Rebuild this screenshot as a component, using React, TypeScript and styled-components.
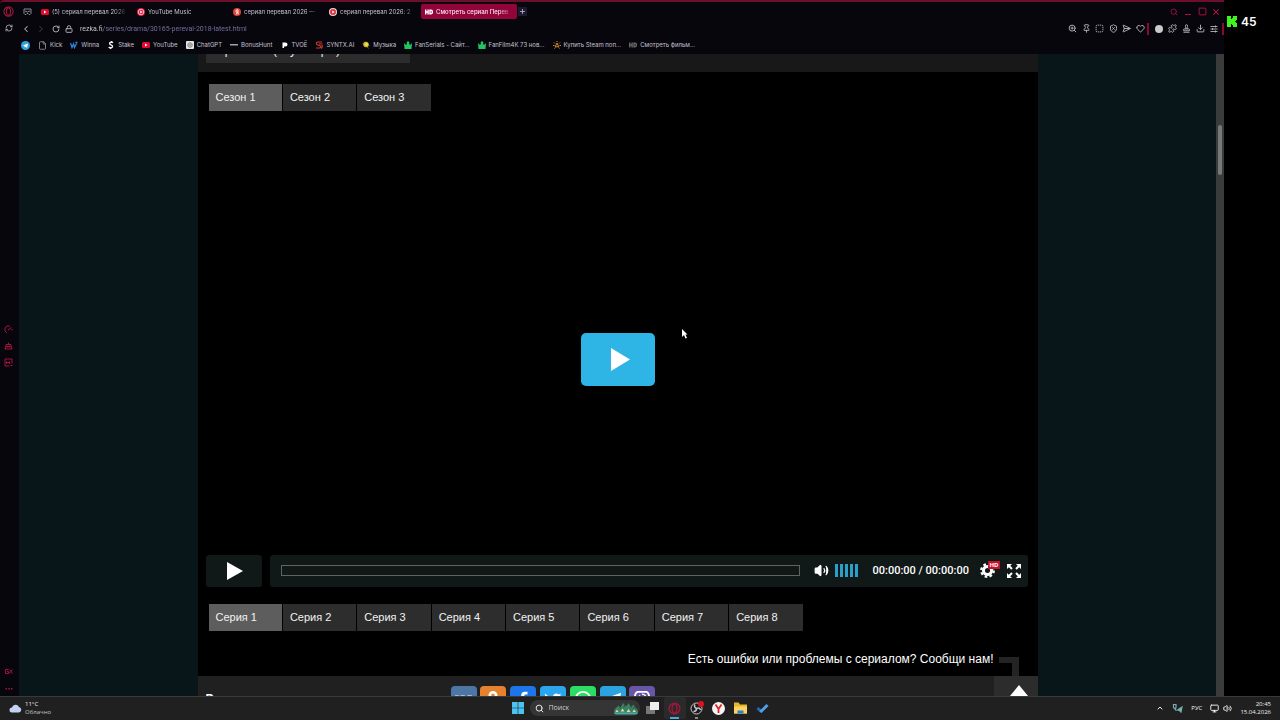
import React from "react";
import styled, { createGlobalStyle, css } from "styled-components";
import {
  RefreshCw,
  ChevronLeft,
  ChevronRight,
  ChevronUp,
  RotateCw,
  Lock,
  File,
  ZoomIn,
  Pin,
  SquareDashed,
  ShieldX,
  SendHorizontal,
  Heart,
  Puzzle,
  Stamp,
  Download,
  Search,
  Square,
  X,
  Plus,
  Volume2,
  Monitor,
} from "lucide-react";

const ui = `Inter, "Noto Sans", sans-serif`;
const site = `"Liberation Sans", Arial, sans-serif`;
const system = `"Open Sans", "Noto Sans", sans-serif`;

const Global = createGlobalStyle`
  * { box-sizing: border-box; }
  body { margin: 0; background: #000; font-family: ${site}; overflow: hidden; }
  button { border: 0; padding: 0; margin: 0; background: none; color: inherit; font: inherit; }
  a { color: inherit; text-decoration: none; }
  svg { display: block; flex: none; }
`;

const Screen = styled.div`
  height: 100vh;
  display: flex;
  flex-direction: column;
`;

const Desktop = styled.div`
  flex: 1;
  min-height: 0;
  display: flex;
`;

const Overlay = styled.aside`
  width: 56px;
  padding: 14px 3px;
  display: flex;
  gap: 4px;
  align-items: flex-start;
  color: #fff;
  font: 600 12px/16px ${ui};
  svg { margin-top: 2px; }
`;

const Browser = styled.main`
  flex: 1;
  min-width: 0;
  display: flex;
  background: #07060c;
  border-top: 2px solid #6b0f2a;
  border-top-left-radius: 4px;
`;

const Sidebar = styled.nav`
  width: 19px;
  padding: 4px 0 2px;
  display: flex;
  flex-direction: column;
  align-items: center;
  color: #b0123f;
`;

const SideGroup = styled.div<{ $gap: number; $push?: boolean; $raise?: boolean }>`
  display: flex;
  flex-direction: column;
  align-items: center;
  gap: ${(p) => p.$gap}px;
  ${(p) => p.$push && css`margin-top: auto;`}
  ${(p) => p.$raise && css`padding-bottom: 9px;`}
  margin-right: 2px;
`;

const IconButton = styled.button<{ $color?: string }>`
  display: flex;
  align-items: center;
  justify-content: center;
  color: ${(p) => p.$color ?? "#b5b2c0"};
`;

const Window = styled.div`
  flex: 1;
  min-width: 0;
  display: flex;
  flex-direction: column;
  font-family: ${ui};
  font-size: 6px;
  line-height: 10px;
  color: #c6c3d1;
`;

const TabStrip = styled.div`
  height: 19px;
  display: flex;
  align-items: center;
  padding-right: 3px;
`;

const Messenger = styled(IconButton)`
  width: 18px;
  padding-right: 2px;
`;

const BrowserTab = styled.button<{ $active?: boolean }>`
  width: 96px;
  height: 15px;
  padding: 0 5px 0 4px;
  display: flex;
  align-items: center;
  gap: 3px;
  border-radius: 2px;
  overflow: hidden;
  white-space: nowrap;
  text-align: left;
  ${(p) =>
    p.$active &&
    css`
      background: #93053a;
      color: #f9e6ee;
      font-weight: 500;
    `}
`;

const TabTitle = styled.span`
  flex: 1;
  overflow: hidden;
  mask-image: linear-gradient(90deg, #000 82%, transparent);
`;

const NewTab = styled(IconButton)`
  width: 9px;
  height: 9px;
  margin-left: 1px;
  background: #1e1930;
`;

const WindowButtons = styled.div`
  margin-left: auto;
  display: flex;
  gap: 4px;
  button { width: 10px; }
`;

const AddressRow = styled.div`
  height: 15px;
  display: flex;
  align-items: center;
`;

const NavButtons = styled.div`
  display: flex;
  width: 58px;
  justify-content: space-between;
  padding: 0 4px 0 2px;
`;

const UrlInput = styled.input`
  flex: 1;
  min-width: 0;
  height: 12px;
  margin-left: 3px;
  padding: 0;
  border: 0;
  outline: 0;
  font: 7px/12px Roboto, sans-serif;
  color: #8d84b4;
  background: linear-gradient(90deg, #d6d2e0 23px, #7b71a3 23px);
  background-clip: text;
  -webkit-text-fill-color: transparent;
`;

const Tools = styled.div<{ $width: number }>`
  width: ${(p) => p.$width}px;
  display: flex;
  align-items: center;
  justify-content: space-between;
`;

const Divider = styled.span`
  width: 2px;
  height: 12px;
  margin: 0 6px 0 2px;
  background: #8a0a36;
  &:last-child { margin: 0 0 0 4px; }
`;

const Bookmarks = styled.nav`
  height: 18px;
  display: flex;
  align-items: center;
  padding-left: 2px;
  gap: 8px;
`;

const Bookmark = styled.a`
  display: flex;
  align-items: center;
  gap: 3px;
  white-space: nowrap;
`;

const Page = styled.div`
  flex: 1;
  min-height: 0;
  display: flex;
  background: #08161a;
  font-family: ${site};
`;

const Viewport = styled.div`
  flex: 1;
  display: flex;
  justify-content: center;
  overflow: hidden;
`;

const ScrollTrack = styled.div`
  width: 8px;
  padding: 71px 2px 0 2px;
  background: #3a3c3c;
`;

const ScrollThumb = styled.div`
  height: 50px;
  border-radius: 2px;
  background: #777979;
`;

const Content = styled.section`
  width: 840px;
  display: flex;
  flex-direction: column;
  background: #000;
  color: #eee;
`;

const TranslatorStrip = styled.div`
  height: 18px;
  padding: 0 8px;
  background: #181818;
`;

const Translator = styled.button`
  display: flex;
  align-items: flex-end;
  width: 204px;
  height: 9px;
  padding: 0 10px 6px;
  overflow: hidden;
  background: #2c2c2c;
  color: #eee;
  font-size: 12px;
  line-height: 14px;
  white-space: nowrap;
`;

const Tabs = styled.div`
  width: 594px;
  margin-left: 11px;
  display: grid;
  grid-template-columns: repeat(8, 1fr);
  gap: 1px;
`;

const Tab = styled.button<{ $active?: boolean }>`
  height: 27px;
  padding: 0 7px;
  text-align: left;
  font-size: 11px;
  line-height: 27px;
  color: #f2f2f2;
  background: ${(p) => (p.$active ? "#5d5d5d" : "#2d2d2d")};
`;

const Seasons = styled.div`
  padding-top: 12px;
`;

const Stage = styled.div`
  flex: 1;
  display: flex;
  align-items: center;
  justify-content: center;
  padding-top: 52px;
`;

const BigPlay = styled.button`
  width: 74px;
  height: 53px;
  display: flex;
  align-items: center;
  justify-content: center;
  padding-left: 5px;
  border-radius: 5px;
  background: #2eb5e6;
`;

const Controls = styled.div`
  display: flex;
  gap: 8px;
  padding: 0 10px 17px 8px;
`;

const PlayButton = styled.button`
  width: 56px;
  height: 32px;
  display: flex;
  align-items: center;
  justify-content: center;
  padding: 0 0 1px 3px;
  border-radius: 3px;
  background: #111918;
`;

const ControlBar = styled.div`
  flex: 1;
  height: 32px;
  display: flex;
  align-items: center;
  padding: 0 7px 1px 11px;
  border-radius: 3px;
  background: #111918;
  color: #fff;
`;

const Seek = styled.input`
  flex: 1;
  height: 11px;
  margin: 0 14px 0 0;
  appearance: none;
  background: #111816;
  border: 1px solid #5d6462;
  &::-webkit-slider-thumb { appearance: none; width: 0; height: 0; }
`;

const Volume = styled.input`
  width: 25px;
  height: 13px;
  margin: 0 13px 0 6px;
  appearance: none;
  background: repeating-linear-gradient(90deg, #2a9fc9 0 3px, transparent 3px 5px);
  &::-webkit-slider-thumb { appearance: none; width: 0; height: 0; }
`;

const Time = styled.span`
  width: 107px;
  font: 500 11px/14px Roboto, sans-serif;
  white-space: nowrap;
`;

const Settings = styled.button`
  position: relative;
  margin-right: 12px;
`;

const Quality = styled.span`
  position: absolute;
  left: 8px;
  top: -2px;
  padding: 0 2px;
  background: #c4122c;
  color: #fff;
  font: 700 6px/8px "Noto Sans", sans-serif;
`;

const ReportRow = styled.div`
  display: flex;
  justify-content: flex-end;
  padding: 19px 19px 0 0;
  gap: 5px;
  height: 45px;
`;

const Report = styled.a`
  font-size: 12px;
  line-height: 18px;
  color: #fff;
`;

const Hook = styled.span`
  width: 20px;
  height: 19px;
  margin-top: 7px;
  border-top: 6px solid #242424;
  border-right: 7px solid #242424;
`;

const Share = styled.div`
  height: 20px;
  display: flex;
  align-items: flex-start;
  padding-left: 8px;
  overflow: hidden;
  background: #202020;
`;

const ShareTitle = styled.h2`
  width: 245px;
  margin: 15px 0 0;
  font-size: 12px;
  line-height: 16px;
  color: #fff;
`;

const ShareLinks = styled.div`
  width: 205px;
  margin-top: 10px;
  display: flex;
  justify-content: space-between;
`;

const ShareLink = styled.a<{ $bg: string }>`
  width: 26px;
  height: 26px;
  display: flex;
  align-items: center;
  justify-content: center;
  border-radius: 4px;
  background: ${(p) => p.$bg};
  color: #fff;
`;

const ToTop = styled.button`
  width: 44px;
  height: 44px;
  margin-left: auto;
  display: flex;
  justify-content: center;
  padding: 9px 0 0 6px;
  background: #2c2c2c;
`;

const Pointer = styled.svg`
  position: absolute;
  left: 682px;
  top: 329px;
`;

const Taskbar = styled.footer`
  height: 24px;
  padding-bottom: 1px;
  display: grid;
  grid-template-columns: 1fr auto 1fr;
  align-items: center;
  background: #202020;
  border-top: 1px solid #383a3a;
  color: #f0f0f0;
  font: 6px/8px ${system};
`;

const Weather = styled.button`
  display: flex;
  align-items: center;
  gap: 3px;
  padding-left: 9px;
  text-align: left;
`;

const Sub = styled.span`
  display: block;
  color: #c4c4c4;
`;

const Apps = styled.div`
  display: flex;
  align-items: center;
`;

const AppButton = styled.button<{ $open?: boolean; $mark?: string }>`
  width: 22px;
  height: 22px;
  display: flex;
  align-items: center;
  justify-content: center;
  border-radius: 2px;
  background-color: ${(p) => (p.$open ? "#2a2a2c" : "transparent")};
  ${(p) =>
    p.$mark &&
    css`
      background-image: linear-gradient(${p.$mark}, ${p.$mark});
      background-size: ${p.$open ? 9 : 3}px 2px;
      background-position: center bottom;
      background-repeat: no-repeat;
    `}
`;

const SearchBox = styled.label`
  width: 110px;
  height: 16px;
  display: flex;
  align-items: center;
  gap: 5px;
  margin: 0 2px 0 1px;
  padding: 0 2px 0 5px;
  border-radius: 8px;
  background: #353535;
  input {
    flex: 1;
    min-width: 0;
    padding: 0;
    border: 0;
    outline: 0;
    background: none;
    font: 7px/12px ${system};
    color: #ccc;
  }
  input::placeholder { color: #d0d0d0; }
`;

const Tray = styled.div`
  display: flex;
  align-items: center;
  justify-content: flex-end;
  padding-right: 9px;
`;

const TrayItem = styled.button<{ $gap: number }>`
  margin-right: ${(p) => p.$gap}px;
`;

const Clock = styled.time`
  text-align: right;
`;

const OperaRing = ({ size }: { size: number }) => (
  <svg width={size} height={size} viewBox="0 0 24 24" fill="none" stroke="#a5163b" strokeWidth="2.4">
    <circle cx="12" cy="12" r="10" />
    <ellipse cx="12" cy="12" rx="4.5" ry="8" />
  </svg>
);

const YouTubeMark = () => (
  <svg width="8" height="8" viewBox="0 0 16 16">
    <rect y="2" width="16" height="12" rx="3" fill="#e5092f" />
    <path d="M6 5l5 3-5 3z" fill="#fff" />
  </svg>
);

const RoundPlay = ({ bg, fill, ring }: { bg: string; fill: string; ring: string }) => (
  <svg width="8" height="8" viewBox="0 0 16 16">
    <circle cx="8" cy="8" r="8" fill={bg} />
    <circle cx="8" cy="8" r="5.500" fill={fill} stroke={ring} strokeWidth="1.4" />
    <path d="M6.500 5l5 3-5 3z" fill="#fff" />
  </svg>
);

const YandexMark = () => (
  <svg width="8" height="8" viewBox="0 0 16 16">
    <circle cx="8" cy="8" r="8" fill="#dc4238" />
    <path d="M10 13V3.5H8.4a2.5 2.5 0 000 5H10M8.6 8.5L6 13" fill="none" stroke="#fff" strokeWidth="1.8" />
  </svg>
);

const HdMark = ({ color }: { color: string }) => (
  <svg width="8" height="8" viewBox="0 0 16 16" fill="none" stroke={color} strokeWidth="2.8">
    <path d="M1.4 3v10M6.200 3v10M1.400 8H6M10 4.400v7.200h1.300a3.600 3.600 0 000-7.200z" />
  </svg>
);

const TelegramMark = () => (
  <svg width="9" height="9" viewBox="0 0 18 18">
    <circle cx="9" cy="9" r="9" fill="#2fa4dc" />
    <path d="M3.500 9L14 4.800l-2 9-3.200-2.400L7.200 13l-.3-3z" fill="#fff" />
  </svg>
);

const WMark = () => (
  <svg width="8" height="8" viewBox="0 0 16 16" fill="none" stroke="#2b86dc" strokeWidth="2.6">
    <path d="M1 4l3 9 3-7 2 7 4-8M11 3h4" />
  </svg>
);

const StakeMark = () => (
  <svg width="8" height="8" viewBox="0 0 16 16" fill="none" stroke="#f1f1f1" strokeWidth="2.8">
    <path d="M12 3.500Q10 2 7.500 2.500 4 3.500 6 6.500l4.500 3Q12 12.500 8.500 13.500 5 14 3.500 12M9.500 0L9 3M7 13v3" />
  </svg>
);

const SyntxMark = () => (
  <svg width="8" height="8" viewBox="0 0 16 16" fill="none" stroke="#d23a30" strokeWidth="2.2">
    <path d="M14 2H6Q2 2.500 3 6q1 2 4 2.500l4 1.500q2 3-2 4H2M15 6H8M14 8q2 5-2 7" />
  </svg>
);

const GptMark = () => (
  <svg width="8" height="8" viewBox="0 0 16 16">
    <rect width="16" height="16" rx="2" fill="#e6e6e6" />
    <path d="M8 3l4.300 2.500v5L8 13l-4.300-2.500v-5zM8 5.500l2.200 1.300v2.400L8 10.500 5.800 9.200V6.800z" fill="none" stroke="#555" strokeWidth="1.2" />
  </svg>
);

const DashMark = () => (
  <svg width="8" height="8" viewBox="0 0 16 16">
    <path d="M0 6h16v3H0z" fill="#a3a3a3" />
  </svg>
);

const TvoeMark = () => (
  <svg width="8" height="8" viewBox="0 0 16 16">
    <path d="M5 3h6a4 4 0 010 8H8v3H5z" fill="#fff" />
  </svg>
);

const MusicMark = () => (
  <svg width="8" height="8" viewBox="0 0 16 16">
    <path d="M8 8l5 7M1 5l14 4M4 1l7 12" stroke="#8c7f20" strokeWidth="1.5" />
    <circle cx="8" cy="7" r="5.500" fill="#d3bb2c" />
    <circle cx="9" cy="7" r="2.500" fill="#f7e867" />
  </svg>
);

const SteamMark = () => (
  <svg width="8" height="8" viewBox="0 0 16 16" fill="none" stroke="#e0922a" strokeWidth="1.9">
    <path d="M8 4l3.500 7.500h-7zM8 0v2M2 3l2 2M14 3l-2 2M0 9h3M13 9h3M3 15l1.500-2M13 15l-1.500-2" />
  </svg>
);

const CrownMark = () => (
  <svg width="8" height="8" viewBox="0 0 16 16" fill="#22c463">
    <path d="M0 4l4 4 2-3-1-2 3-3 3 3-1 2 2 3 4-4-1 12H1z" />
  </svg>
);

const tabs = [
  { icon: <YouTubeMark />, title: "(5) сериал перевал 2026" },
  { icon: <RoundPlay bg="#e3123a" fill="#e3123a" ring="#fff" />, title: "YouTube Music" },
  { icon: <YandexMark />, title: "сериал перевал 2026 —" },
  { icon: <RoundPlay bg="#f4dede" fill="#d9303a" ring="#d9303a" />, title: "сериал перевал 2026: 2" },
  { icon: <HdMark color="#fff" />, title: "Смотреть сериал Перев", active: true },
];

const bookmarks = [
  { icon: <File size={9} color="#a7a4b2" strokeWidth={2} />, label: "Kick" },
  { icon: <WMark />, label: "Winna" },
  { icon: <StakeMark />, label: "Stake" },
  { icon: <YouTubeMark />, label: "YouTube" },
  { icon: <GptMark />, label: "ChatGPT" },
  { icon: <DashMark />, label: "BonusHunt" },
  { icon: <TvoeMark />, label: "TVOЁ" },
  { icon: <SyntxMark />, label: "SYNTX.AI" },
  { icon: <MusicMark />, label: "Музыка" },
  { icon: <CrownMark />, label: "FanSerials - Сайт..." },
  { icon: <CrownMark />, label: "FanFilm4K 73 нов..." },
  { icon: <SteamMark />, label: "Купить Steam поп..." },
  { icon: <HdMark color="#666" />, label: "Смотреть фильм..." },
];

const shares = [
  {
    name: "ВКонтакте",
    bg: "#4d76a6",
    icon: <path d="M0 6h4l2 4V6h5v4l3-4h5l-4 5 4 5h-4l-4-4v4H9C5 16 2 13 0 6z" />,
  },
  {
    name: "Одноклассники",
    bg: "#e6812f",
    icon: <path d="M10 1a5 5 0 110 10 5 5 0 010-10zm0 3a2 2 0 100 4 2 2 0 000-4zM5 12q5 3 10 0l1 2-4 2 3 3-2 1-3-3-3 3-2-1 3-3-4-2z" />,
  },
  { name: "Facebook", bg: "#1d75ea", icon: <path d="M8 20v-8H5V8h3V6c0-3 2-4 4-4h3v3h-2c-1 0-1.500.5-1.500 1.500V8H15l-.5 4h-3v8z" /> },
  { name: "Twitter", bg: "#2aa5ee", icon: <path d="M1 4q4 4 9 4.300C9.500 4 14 2.500 16 5l3-1-1.500 2.500L19.500 6 18 8.500C18 16 9 20 1 16q3 0 5-2-3-.5-4-3h2Q1 9 1 4z" /> },
  {
    name: "WhatsApp",
    bg: "#2bdd62",
    icon: (
      <>
        <circle cx="10" cy="10" r="8" fill="none" stroke="#fff" strokeWidth="2" />
        <path d="M7 6l1.500 2.500L8 10l2.500 2.500 1.500-.8 2 1.500c-1 3-8 1-9-5z" />
      </>
    ),
  },
  { name: "Telegram", bg: "#2ba3e0", icon: <path d="M0 10L19 3l-3 15-6-4-3 3v-5l8-6-10 5z" /> },
  {
    name: "Viber",
    bg: "#6856a8",
    icon: (
      <>
        <path d="M5 2h10q3 1 3 7t-5 6h-3l-3 3v-3Q2 15 2 9t3-7z" fill="none" stroke="#fff" strokeWidth="2" />
        <path d="M7 5l1.500 2L8 8.500l2.500 2.500 1.500-.8 2 1.500C12 14 6 10 7 5z" />
        <path d="M10 4.500q4 0 4 4" stroke="#fff" fill="none" strokeWidth="1.500" />
      </>
    ),
  },
];

const PlayTriangle = ({ w, h }: { w: number; h: number }) => (
  <svg width={w} height={h} viewBox="0 0 20 24" preserveAspectRatio="none">
    <path d="M0 0l20 12L0 24z" fill="#fff" />
  </svg>
);

export default function App() {
  return (
    <Screen>
      <Global />
      <Desktop>
        <Browser>
          <Sidebar aria-label="Боковая панель">
            <SideGroup $gap={7}>
              <IconButton aria-label="Opera"><OperaRing size={11} /></IconButton>
              <IconButton $color="#b5b2c0" aria-label="Синхронизация"><RefreshCw size={8} strokeWidth={2.5} /></IconButton>
            </SideGroup>
            <SideGroup $gap={8} $push $raise>
              <IconButton aria-label="Нагрузка">
                <svg width="9" height="9" viewBox="0 0 18 18" fill="none" stroke="#a5103d" strokeWidth="2">
                  <path d="M12 2Q5 0 2 6q-2 7 4 10M8 10l7-5M16 8v3" />
                </svg>
              </IconButton>
              <IconButton aria-label="Помощник">
                <svg width="9" height="8" viewBox="0 0 18 16" fill="none" stroke="#a5103d" strokeWidth="2">
                  <path d="M4 8V5h10v3M9 5V1M1 14h16M3 14V9h12v5M6 11h1M11 11h1" />
                </svg>
              </IconButton>
              <IconButton aria-label="Галерея">
                <svg width="9" height="9" viewBox="0 0 18 18" fill="none" stroke="#a5103d" strokeWidth="2">
                  <path d="M11 16H2V2h14v9M5 12V7l3 3 3-3v5M13 15h4" />
                </svg>
              </IconButton>
            </SideGroup>
            <SideGroup $gap={12} $push>
              <IconButton aria-label="GX">
                <svg width="8" height="5" viewBox="0 0 16 10" fill="none" stroke="#a5103d" strokeWidth="2">
                  <path d="M7 1H1v8h6V5H4M9 1l6 8M15 1L9 9" />
                </svg>
              </IconButton>
              <IconButton aria-label="Ещё">
                <svg width="8" height="8" viewBox="0 0 16 16" fill="#a5103d">
                  <path d="M1 4h3v3H1zM6.500 4h3v3h-3zM12 4h3v3h-3z" />
                </svg>
              </IconButton>
            </SideGroup>
          </Sidebar>

          <Window>
            <TabStrip>
              <Messenger aria-label="Почта">
                <svg width="9" height="8" viewBox="0 0 18 16" fill="none" stroke="#8d8a98" strokeWidth="2">
                  <path d="M2 2h14v9l-2 2h-2l-2-2H8l-2 2H4l-2-2zM4 6q5 4 10 0" />
                </svg>
              </Messenger>
              {tabs.map((t) => (
                <BrowserTab key={t.title} $active={t.active}>
                  {t.icon}
                  <TabTitle>{t.title}</TabTitle>
                </BrowserTab>
              ))}
              <NewTab aria-label="Новая вкладка"><Plus size={7} strokeWidth={3} /></NewTab>
              <WindowButtons>
                <IconButton $color="#b0123f" aria-label="Поиск вкладок"><Search size={8} strokeWidth={2.5} /></IconButton>
                <IconButton aria-label="Свернуть">
                  <svg width="8" height="8" viewBox="0 0 8 8"><path d="M1 6h6v1H1z" fill="#b0123f" /></svg>
                </IconButton>
                <IconButton $color="#b0123f" aria-label="Развернуть"><Square size={9} strokeWidth={2.5} /></IconButton>
                <IconButton $color="#c8134a" aria-label="Закрыть"><X size={10} strokeWidth={2.5} /></IconButton>
              </WindowButtons>
            </TabStrip>

            <AddressRow>
              <NavButtons>
                <IconButton aria-label="Назад"><ChevronLeft size={10} strokeWidth={2.5} /></IconButton>
                <IconButton $color="#3b3847" aria-label="Вперёд"><ChevronRight size={10} strokeWidth={2.5} /></IconButton>
                <IconButton aria-label="Обновить"><RotateCw size={8} strokeWidth={2.8} /></IconButton>
                <IconButton aria-label="Сведения о сайте"><Lock size={8} strokeWidth={2.8} /></IconButton>
              </NavButtons>
              <UrlInput aria-label="Адрес" defaultValue="rezka.fi/series/drama/30165-pereval-2018-latest.html" />
              <Tools $width={77}>
                <IconButton aria-label="Масштаб"><ZoomIn size={9} strokeWidth={2.5} /></IconButton>
                <IconButton aria-label="Закрепить"><Pin size={9} strokeWidth={2.5} /></IconButton>
                <IconButton aria-label="Снимок"><SquareDashed size={9} strokeWidth={2.5} /></IconButton>
                <IconButton aria-label="Блокировка"><ShieldX size={9} strokeWidth={2.5} /></IconButton>
                <IconButton aria-label="Поделиться"><SendHorizontal size={9} strokeWidth={2.5} /></IconButton>
                <IconButton aria-label="В избранное"><Heart size={9} strokeWidth={2.5} /></IconButton>
              </Tools>
              <Divider />
              <Tools $width={63}>
                <IconButton aria-label="Профиль">
                  <svg width="8" height="8" viewBox="0 0 8 8"><circle cx="4" cy="4" r="4" fill="#c9c9c9" /></svg>
                </IconButton>
                <IconButton aria-label="Расширения"><Puzzle size={9} strokeWidth={2.5} /></IconButton>
                <IconButton aria-label="Инструменты"><Stamp size={9} strokeWidth={2.5} /></IconButton>
                <IconButton aria-label="Загрузки"><Download size={9} strokeWidth={2.5} /></IconButton>
                <IconButton aria-label="Меню">
                  <svg width="8" height="8" viewBox="0 0 16 16" fill="none" stroke="#b5b2c0" strokeWidth="1.8">
                    <path d="M1 3h14M1 8h14M1 13h14M11 1v4M5 6v4M11 11v4" />
                  </svg>
                </IconButton>
              </Tools>
              <Divider />
            </AddressRow>

            <Bookmarks aria-label="Закладки">
              <Bookmark href="#telegram" aria-label="Telegram"><TelegramMark /></Bookmark>
              {bookmarks.map((b) => (
                <Bookmark href="#bookmark" key={b.label}>
                  {b.icon}
                  {b.label}
                </Bookmark>
              ))}
            </Bookmarks>

            <Page>
              <Viewport>
                <Content>
                  <TranslatorStrip>
                    <Translator>Оригинал (+субтитры)</Translator>
                  </TranslatorStrip>
                  <Seasons>
                    <Tabs>
                      {[1, 2, 3].map((n) => (
                        <Tab key={n} $active={n === 1}>Сезон {n}</Tab>
                      ))}
                    </Tabs>
                  </Seasons>
                  <Stage>
                    <BigPlay aria-label="Смотреть"><PlayTriangle w={19} h={23} /></BigPlay>
                  </Stage>
                  <Controls>
                    <PlayButton aria-label="Воспроизвести"><PlayTriangle w={16} h={18} /></PlayButton>
                    <ControlBar>
                      <Seek type="range" aria-label="Позиция" defaultValue={0} />
                      <IconButton $color="#fff" aria-label="Звук">
                        <Volume2 size={15} fill="#fff" strokeWidth={2} />
                      </IconButton>
                      <Volume type="range" aria-label="Громкость" defaultValue={100} />
                      <Time>00:00:00 / 00:00:00</Time>
                      <Settings aria-label="Качество">
                        <svg width="15" height="15" viewBox="0 0 16 16">
                          <circle cx="8" cy="8" r="4.300" fill="none" stroke="#fff" strokeWidth="3.200" />
                          <circle cx="8" cy="8" r="6.700" fill="none" stroke="#fff" strokeWidth="2.400" strokeDasharray="2.800 2.460" />
                        </svg>
                        <Quality>HD</Quality>
                      </Settings>
                      <IconButton aria-label="Во весь экран">
                        <svg width="14" height="14" viewBox="0 0 14 14" fill="#fff" stroke="#fff" strokeWidth="2">
                          <path d="M0 0h5L0 5zM14 0v5L9 0zM0 14V9l5 5zM14 14H9l5-5z" stroke="none" />
                          <path d="M2 2l3 3M12 2L9 5M2 12l3-3M12 12L9 9" />
                        </svg>
                      </IconButton>
                    </ControlBar>
                  </Controls>
                  <Tabs>
                    {[1, 2, 3, 4, 5, 6, 7, 8].map((n) => (
                      <Tab key={n} $active={n === 1}>Серия {n}</Tab>
                    ))}
                  </Tabs>
                  <ReportRow>
                    <Report href="#report">Есть ошибки или проблемы с сериалом? Сообщи нам!</Report>
                    <Hook />
                  </ReportRow>
                  <Share>
                    <ShareTitle>Рассказать друзьям</ShareTitle>
                    <ShareLinks>
                      {shares.map((s) => (
                        <ShareLink key={s.name} href="#share" $bg={s.bg} aria-label={s.name}>
                          <svg width="18" height="18" viewBox="0 0 20 20" fill="#fff">{s.icon}</svg>
                        </ShareLink>
                      ))}
                    </ShareLinks>
                    <ToTop aria-label="Наверх">
                      <svg width="18" height="11" viewBox="0 0 18 11"><path d="M9 0l9 11H0z" fill="#fff" /></svg>
                    </ToTop>
                  </Share>
                </Content>
              </Viewport>
              <ScrollTrack><ScrollThumb /></ScrollTrack>
            </Page>
          </Window>
        </Browser>
        <Overlay>
          <svg width="10" height="11" viewBox="0 0 10 11" fill="#3df51b">
            <path d="M0 0h4v3h1V2h1V0h4v4H9v1H8v1h1v1h1v4H6V9H5V8H4v3H0z" />
          </svg>
          45
        </Overlay>
      </Desktop>

      <Taskbar>
        <Weather>
          <svg width="13" height="9" viewBox="0 0 26 18">
            <path d="M6 17a5 5 0 010-10 7.500 7.500 0 0114-1 5.600 5.600 0 010 11z" fill="#c3d2f4" />
          </svg>
          <span>
            11°C
            <Sub>Облачно</Sub>
          </span>
        </Weather>
        <Apps>
          <AppButton aria-label="Пуск">
            <svg width="12" height="12" viewBox="0 0 12 12" fill="#4cc2f1">
              <path d="M0 0h5.700v5.700H0zM6.300 0H12v5.700H6.300zM0 6.300h5.700V12H0zM6.300 6.300H12V12H6.300z" />
            </svg>
          </AppButton>
          <SearchBox>
            <Search size={9} strokeWidth={2.5} />
            <input placeholder="Поиск" aria-label="Поиск" />
            <svg width="24" height="13" viewBox="0 0 48 26">
              <path d="M0 24q-1-10 5-13l4-4 4 4 5-9 6 7 5-7 5 8 5-5 4 7q6 2 5 12z" fill="#3d8061" />
              <path d="M10 10l4 3M22 6l-3 6M33 8l2 4M41 10l-3 4" stroke="#2a5c46" strokeWidth="2" />
              <path d="M3 20l3-5 3 5zM13 19l4-6 4 6zM25 20l4-6 4 6zM37 20l3-5 4 5z" fill="#e0d7a8" />
              <path d="M1 21h46l-2 4H3z" fill="#47a8a4" />
            </svg>
          </SearchBox>
          <AppButton aria-label="Представление задач">
            <svg width="13" height="12" viewBox="0 0 13 12">
              <path d="M0 4h9v8H0z" fill="#777" />
              <path d="M4 0h9v8H4z" fill="#eee" />
            </svg>
          </AppButton>
          <AppButton $open $mark="#4aa9dc" aria-label="Opera GX"><OperaRing size={13} /></AppButton>
          <AppButton $mark="#8a8a8a" aria-label="OBS Studio">
            <svg width="14" height="14" viewBox="0 0 28 28" fill="none" stroke="#c9c9c9" strokeWidth="2">
              <circle cx="13" cy="15" r="11" fill="#1b1b1b" />
              <path d="M13 15q-6-3-3-8M13 15q0 6-6 6M13 15q6-3 8 3" strokeWidth="3" />
              <circle cx="22" cy="6" r="6" fill="#e0121f" stroke="none" />
            </svg>
          </AppButton>
          <AppButton aria-label="Яндекс Браузер">
            <svg width="13" height="13" viewBox="0 0 26 26">
              <circle cx="13" cy="13" r="13" fill="#f4f4f4" />
              <path d="M7 5l6 9 6-9M13 14v8" fill="none" stroke="#e0212a" strokeWidth="3.500" />
            </svg>
          </AppButton>
          <AppButton aria-label="Проводник">
            <svg width="13" height="12" viewBox="0 0 26 24">
              <path d="M0 1h9l3 4h14v18H0z" fill="#e8b32d" />
              <path d="M0 9h26v14H0z" fill="#fbd461" />
              <path d="M7 17h12v6H7z" fill="#2f7fd0" />
            </svg>
          </AppButton>
          <AppButton aria-label="To Do">
            <svg width="13" height="11" viewBox="0 0 26 22" fill="none" strokeWidth="6">
              <path d="M3 10l8 8" stroke="#2566b5" />
              <path d="M9 18L23 4" stroke="#4fa0ea" />
            </svg>
          </AppButton>
        </Apps>
        <Tray>
          <TrayItem $gap={8} aria-label="Скрытые значки"><ChevronUp size={8} strokeWidth={3} /></TrayItem>
          <TrayItem $gap={8} aria-label="Устройства">
            <svg width="11" height="9" viewBox="0 0 22 18" fill="none" stroke="#79aeb0" strokeWidth="2.400">
              <path d="M3 1h5v6l-2 3-3-3zM6 11l3 2" />
              <path d="M20 6l-2 10-3-3-4-1z" fill="#79aeb0" />
            </svg>
          </TrayItem>
          <TrayItem $gap={8}>РУС</TrayItem>
          <TrayItem $gap={4} aria-label="Сеть"><Monitor size={9} strokeWidth={2.5} /></TrayItem>
          <TrayItem $gap={8} aria-label="Громкость"><Volume2 size={9} strokeWidth={2.5} /></TrayItem>
          <Clock>
            20:45
            <br />
            15.04.2026
          </Clock>
        </Tray>
      </Taskbar>

      <Pointer width="6" height="10" viewBox="0 0 12 20">
        <path d="M0 0l11 11H7l3 7-3 1-3-7-4 4z" fill="#fff" />
      </Pointer>
    </Screen>
  );
}
